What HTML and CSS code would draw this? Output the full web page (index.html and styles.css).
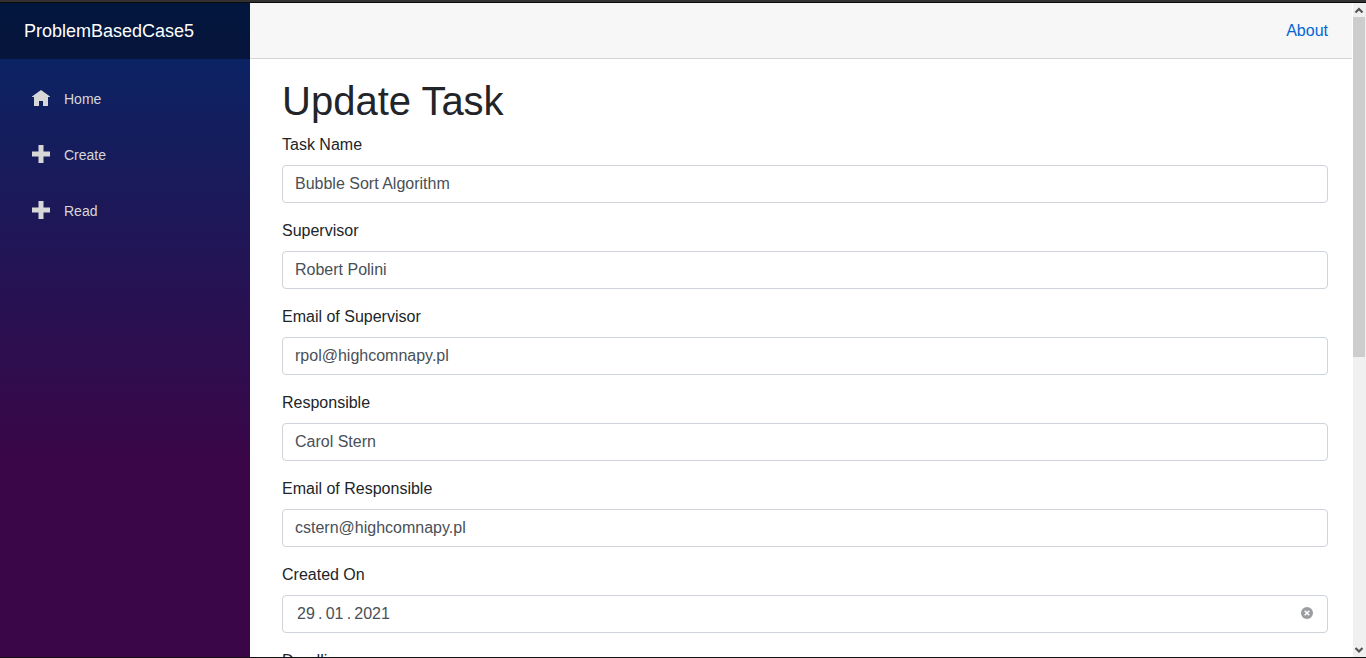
FILE: index.html
```html
<!DOCTYPE html>
<html lang="en">
<head>
<meta charset="utf-8">
<title>ProblemBasedCase5</title>
<link rel="stylesheet" href="styles.css">
</head>
<body>
<div class="window">
  <aside class="sidebar">
    <div class="brand-bar"><a class="brand" href="#">ProblemBasedCase5</a></div>
    <nav class="nav">
      <a class="nav-link" href="#"><svg class="nav-icon" viewBox="0 0 18 18" aria-hidden="true"><path d="M9 1 0 7.500V8h2v9h5v-5h4v5h5V8h2v-.5z"/></svg>Home</a>
      <a class="nav-link" href="#"><svg class="nav-icon" viewBox="0 0 18 18" aria-hidden="true"><path d="M6.500 0h5v6.500H18v5h-6.500V18h-5v-6.500H0v-5h6.500z"/></svg>Create</a>
      <a class="nav-link" href="#"><svg class="nav-icon" viewBox="0 0 18 18" aria-hidden="true"><path d="M6.500 0h5v6.500H18v5h-6.500V18h-5v-6.500H0v-5h6.500z"/></svg>Read</a>
    </nav>
  </aside>
  <main class="main">
    <header class="top-row"><a class="about" href="#">About</a></header>
    <form class="content">
      <h1 class="title">Update Task</h1>
      <div class="group"><label class="label" for="name">Task Name</label><input class="control" id="name" type="text" value="Bubble Sort Algorithm"></div>
      <div class="group"><label class="label" for="sup">Supervisor</label><input class="control" id="sup" type="text" value="Robert Polini"></div>
      <div class="group"><label class="label" for="supmail">Email of Supervisor</label><input class="control" id="supmail" type="text" value="rpol@highcomnapy.pl"></div>
      <div class="group"><label class="label" for="resp">Responsible</label><input class="control" id="resp" type="text" value="Carol Stern"></div>
      <div class="group"><label class="label" for="respmail">Email of Responsible</label><input class="control" id="respmail" type="text" value="cstern@highcomnapy.pl"></div>
      <div class="group"><label class="label" for="created">Created On</label>
        <div class="control date">
          <input class="date-input" id="created" type="text" value="29&#8201;.&#8201;01&#8201;.&#8201;2021">
          <button class="clear" type="button" aria-label="Clear"><svg class="clear-icon" viewBox="0 0 12 12" aria-hidden="true"><circle cx="6" cy="6" r="6" fill="#9b9da1"/><path d="m3.700 3.700 4.600 4.600m0-4.600L3.700 8.300" stroke="#fff" stroke-width="1.500"/></svg></button>
        </div>
      </div>
      <div class="group"><label class="label" for="deadline">Deadline</label><input class="control" id="deadline" type="text"></div>
    </form>
  </main>
  <div class="scrollbar" aria-hidden="true">
    <svg class="arrow" viewBox="0 0 13 14"><path d="M2.500 9.500 6 6 9.500 9.500" fill="none" stroke="#555" stroke-width="2.200"/></svg>
    <div class="track"><div class="thumb"></div></div>
    <svg class="arrow" viewBox="0 0 13 14"><path d="M2.500 5 6 8.500 9.500 5" fill="none" stroke="#555" stroke-width="2.200"/></svg>
  </div>
</div>
</body>
</html>
```

FILE: styles.css
```css
* { box-sizing: border-box; }

body {
  margin: 0;
  font: 16px/24px "Liberation Sans", Arial, sans-serif;
  color: #212529;
  background: #fff;
}

.window {
  display: flex;
  height: 100vh;
  overflow: hidden;
  padding-top: 3px;
  background: linear-gradient(#333132 2px, #0c0c0c 2px, #0c0c0c 3px, #fff 3px);
  border-bottom: 1px solid #111;
}

.sidebar {
  flex: 0 0 250px;
  background: linear-gradient(180deg, #052767 0%, #3a0647 70%);
}

.brand-bar {
  display: flex;
  align-items: center;
  height: 56px;
  padding-left: 24px;
  background: rgba(0, 0, 0, 0.4);
}

.brand {
  font-size: 18px;
  color: #fff;
  text-decoration: none;
}

.nav {
  display: flex;
  flex-direction: column;
  gap: 8px;
  padding: 16px;
}

.nav-link {
  display: flex;
  align-items: center;
  gap: 14px;
  height: 48px;
  padding-left: 16px;
  font-size: 14px;
  color: #d7d7d7;
  text-decoration: none;
}

.nav-icon {
  width: 18px;
  height: 18px;
  margin-bottom: 3px;
  fill: currentColor;
}

.main {
  flex: 1;
  min-width: 0;
  overflow: hidden;
}

.top-row {
  display: flex;
  align-items: center;
  justify-content: flex-end;
  height: 56px;
  padding: 0 24px;
  background: #f7f7f7;
  border-bottom: 1px solid #d6d5d5;
}

.about {
  color: #0366d6;
  text-decoration: none;
}

.content { padding: 18px 24px 0 32px; }

.title {
  margin: 0 0 8px;
  font-size: 40px;
  line-height: 48px;
  font-weight: 400;
}

.group { margin-bottom: 16px; }

.label {
  display: block;
  margin-bottom: 8px;
}

.control {
  display: block;
  width: 100%;
  height: 38px;
  padding: 0 12px;
  font: inherit;
  color: #495057;
  background: #fff;
  border: 1px solid #ced4da;
  border-radius: 4px;
}

.date {
  display: flex;
  align-items: center;
  padding: 0 14px;
}

.date-input {
  flex: 1;
  min-width: 0;
  padding: 0;
  border: 0;
  font: inherit;
  color: inherit;
  background: none;
}

.clear {
  display: flex;
  padding: 0 0 2px;
  border: 0;
  background: none;
}

.clear-icon {
  width: 12px;
  height: 12px;
}

.scrollbar {
  display: flex;
  flex-direction: column;
  flex: 0 0 14px;
  background: #f0f0f0;
  border-left: 1px solid #fff;
}

.arrow {
  width: 13px;
  height: 14px;
}

.track { flex: 1; }

.thumb {
  width: 12px;
  height: 54.3%;
  background: #cdcdcd;
}
```
